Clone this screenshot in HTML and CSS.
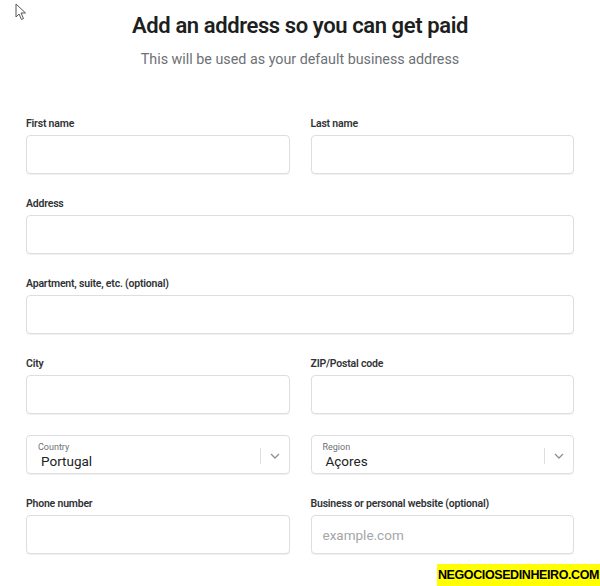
FILE: index.html
```html
<!DOCTYPE html>
<html>
<head>
    <meta charset="utf-8" />
    <link rel="stylesheet" href="styles.css">
</head>
<body>
    <svg class="cursor" width="12" height="18" viewBox="0 0 12 18">
        <path d="M1 1 L1 14 L4 11 L6.5 16.5 L8.5 15.5 L6 10 L10.5 10 Z" fill="#fff" stroke="#555" stroke-width="1" />
    </svg>
    <div class="page">
        <h1 class="title">Add an address so you can get paid</h1>
        <p class="subtitle">This will be used as your default business address</p>

        <form class="address-form">
            <div class="row">
                <div class="field">
                    <label>First name</label>
                    <input type="text" />
                </div>
                <div class="field">
                    <label>Last name</label>
                    <input type="text" />
                </div>
            </div>
            <div class="row">
                <div class="field">
                    <label>Address</label>
                    <input type="text" />
                </div>
            </div>
            <div class="row">
                <div class="field">
                    <label>Apartment, suite, etc. (optional)</label>
                    <input type="text" />
                </div>
            </div>
            <div class="row">
                <div class="field">
                    <label>City</label>
                    <input type="text" />
                </div>
                <div class="field">
                    <label>ZIP/Postal code</label>
                    <input type="text" />
                </div>
            </div>
            <div class="row row-select">
                <div class="select">
                    <div class="select-text">
                        <span class="select-label">Country</span>
                        <span class="select-value">Portugal</span>
                    </div>
                    <div class="select-arrow">
                        <svg width="10" height="6" viewBox="0 0 10 6"><path d="M1 1 L5 5 L9 1" fill="none" stroke="#8c9196" stroke-width="1.3" /></svg>
                    </div>
                </div>
                <div class="select">
                    <div class="select-text">
                        <span class="select-label">Region</span>
                        <span class="select-value">Açores</span>
                    </div>
                    <div class="select-arrow">
                        <svg width="10" height="6" viewBox="0 0 10 6"><path d="M1 1 L5 5 L9 1" fill="none" stroke="#8c9196" stroke-width="1.3" /></svg>
                    </div>
                </div>
            </div>
            <div class="row">
                <div class="field">
                    <label>Phone number</label>
                    <input type="text" />
                </div>
                <div class="field">
                    <label>Business or personal website (optional)</label>
                    <input type="text" placeholder="example.com" />
                </div>
            </div>
        </form>
    </div>
    <div class="watermark">NEGOCIOSEDINHEIRO.COM</div>
</body>
</html>
```

FILE: styles.css
```css
body {
    margin: 0;
    background: #fff;
    font-family: Roboto, "Liberation Sans", sans-serif;
    color: #202223;
    width: 600px;
    height: 586px;
    overflow: hidden;
    position: relative;
}

.cursor {
    position: absolute;
    left: 15px;
    top: 3px;
}

.page {
    padding: 0 26px;
}

.title {
    margin: 0;
    padding-top: 13px;
    text-align: center;
    font-size: 22px;
    line-height: 26px;
    font-weight: 600;
    letter-spacing: -0.4px;
    color: #1d1f21;
}

.subtitle {
    margin: 10px 0 0;
    text-align: center;
    font-size: 14.3px;
    line-height: 20px;
    color: #6d7175;
}

.address-form {
    margin-top: 48px;
    display: flex;
    flex-direction: column;
    gap: 23px;
}

.row {
    display: flex;
    gap: 21px;
}

/* the selects sit a little closer to the row above */
.row-select {
    margin-top: -2px;
}

.field {
    flex: 1;
    display: flex;
    flex-direction: column;
}

.field label {
    font-size: 10.5px;
    font-weight: 600;
    line-height: 13px;
    color: #303335;
    margin-bottom: 5px;
    letter-spacing: -0.2px;
}

.field input {
    box-sizing: border-box;
    height: 39px;
    border: 1px solid #dcdee1;
    border-radius: 4px;
    box-shadow: 0 1px 1px rgba(0, 0, 0, 0.06);
    padding: 0 11px;
    font-family: Roboto, "Liberation Sans", sans-serif;
    font-size: 13.5px;
    color: #202223;
    outline: none;
}

.field input::placeholder {
    color: #a3a6a9;
}

.select {
    flex: 1;
    box-sizing: border-box;
    height: 39px;
    border: 1px solid #dcdee1;
    border-radius: 4px;
    box-shadow: 0 1px 1px rgba(0, 0, 0, 0.06);
    display: flex;
    align-items: center;
}

.select-text {
    flex: 1;
    display: flex;
    flex-direction: column;
    padding-left: 11px;
}

.select-label {
    font-size: 9px;
    line-height: 11px;
    color: #6d7175;
    margin-top: 1px;
}

.select-value {
    font-size: 13.5px;
    line-height: 16px;
    color: #202223;
    padding-left: 3px;
}

.select-arrow {
    height: 16px;
    padding: 0 9px 0 9px;
    border-left: 1px solid #dcdee1;
    display: flex;
    align-items: center;
    margin-top: 3px;
}

.watermark {
    position: absolute;
    right: 0;
    bottom: 0;
    width: 163px;
    height: 22px;
    background: #ffff00;
    color: #000;
    font-family: "Liberation Sans", sans-serif;
    font-weight: 700;
    font-size: 12.5px;
    line-height: 22px;
    text-align: center;
    letter-spacing: -0.4px;
}
```
